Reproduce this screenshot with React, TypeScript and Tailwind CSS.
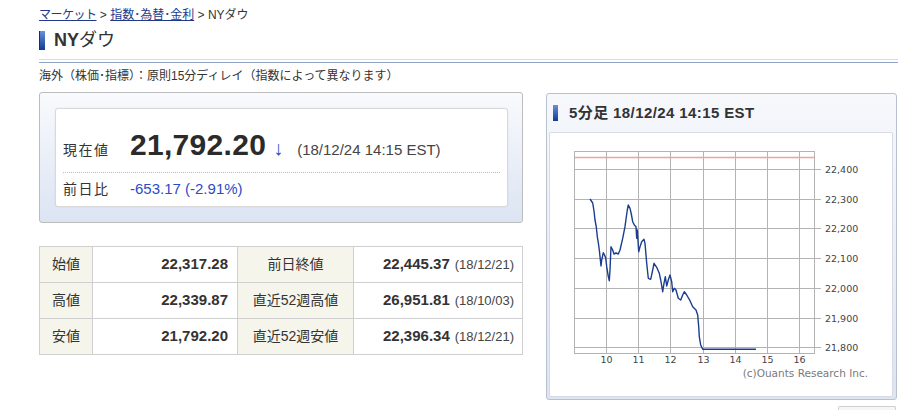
const font = { fontFamily: '"Liberation Sans", "Noto Sans CJK JP", sans-serif' };

// intraday 5-minute closes, already placed on the plot (x: px from 9:00, y: px from top)
const line: [number, number][] = [
  [16, 48], [18.7, 52], [20, 60], [21, 69], [22.3, 76], [23.3, 85.7], [24.5, 93], [25.3, 99], [27, 115],
  [27.7, 109], [29.3, 101.7], [30.5, 104], [31.7, 107], [32.7, 115.7], [34.3, 125.7], [35.3, 129.7],
  [36, 119], [37, 95.7], [38.7, 99], [40, 103], [42, 102], [44.3, 103], [46, 99], [48.7, 87.3],
  [51, 75.7], [52.3, 66], [53.3, 59], [54.3, 54], [56, 57.3], [57.3, 63], [58.7, 70.7], [60.3, 74],
  [62, 75.7], [62.7, 87.3], [63.3, 79], [64.7, 100.7], [66, 95.7], [67.7, 90.7], [70, 88.3],
  [71, 92.3], [72.7, 112.3], [74.3, 127.3], [76.7, 128.3], [78.7, 119], [80, 112.3], [82.7, 116.3],
  [85.3, 122.3], [86.7, 129], [88.7, 140.7], [90, 132.3], [91.3, 125.7], [92.7, 135], [94.3, 129],
  [96, 124], [97.7, 130.7], [98.7, 140.7], [100.3, 137.3], [102, 139], [104.3, 147.3], [106.7, 149],
  [108.7, 144], [110.3, 140.7], [112.7, 144], [116, 149.7], [118.7, 155.7], [122, 159], [123.7, 164],
  [124.7, 175.7], [125.3, 185.7], [126.7, 194], [128.7, 198.3], [182, 198.3],
];

const hours = [10, 11, 12, 13, 14, 15, 16];
const levels = [22400, 22300, 22200, 22100, 22000, 21900, 21800];
const hx = (h: number) => Math.round((h - 9) * 32.15) + 0.5;
const py = (p: number) => Math.round(18 + (22400 - p) * 0.297) + 0.5;

const IntradayChart = () => {
  const d = "M" + line.map(([x, y]) => `${x} ${y}`).join(" L");
  return (
    <svg width="300" height="232" viewBox="0 0 300 232" className="overflow-visible block">
      <rect x="0.5" y="0.5" width="240" height="202" fill="#fff" stroke="#b3b3b3" />
      {hours.map((h) => (
        <line key={h} x1={hx(h)} y1="0" x2={hx(h)} y2="203" stroke="#b3b3b3" />
      ))}
      {levels.map((p) => (
        <g key={p}>
          <line x1="0" y1={py(p)} x2="247" y2={py(p)} stroke="#b3b3b3" />
          <text x="251" y={py(p) + 3.5} fontSize="9.5" fill="#444" fontFamily="DejaVu Sans, sans-serif">
            {p.toLocaleString("en-US")}
          </text>
        </g>
      ))}
      <line x1="0.5" y1="6.5" x2="240.5" y2="6.5" stroke="#f2a0a0" strokeWidth="1.6" />
      <path d={d} fill="none" stroke="#1b3d8f" strokeWidth="1.4" strokeLinejoin="round" />
      {hours.map((h) => (
        <text
          key={h}
          x={hx(h)}
          y="212"
          fontSize="9.5"
          fill="#444"
          textAnchor="middle"
          fontFamily="DejaVu Sans, sans-serif"
        >
          {h}
        </text>
      ))}
      <text x="294" y="226" fontSize="10.5" fill="#7a7a7a" textAnchor="end" fontFamily="DejaVu Sans, sans-serif">
        (c)Ouants Research Inc.
      </text>
    </svg>
  );
};

const rows = [
  { k: "始値", v: "22,317.28", k2: "前日終値", v2: "22,445.37", date: "(18/12/21)" },
  { k: "高値", v: "22,339.87", k2: "直近52週高値", v2: "26,951.81", date: "(18/10/03)" },
  { k: "安値", v: "21,792.20", k2: "直近52週安値", v2: "22,396.34", date: "(18/12/21)" },
];

const App = () => {
  return (
    <div className="min-h-screen bg-white text-[#333]" style={font}>
      <div className="pl-[39px] pt-[8px] w-[898px]">
        <div className="text-[12px] leading-[14px] text-[#333]">
          <span className="text-[#22398a] underline tracking-[-0.5px]">マーケット</span>
          <span> &gt; </span>
          <span className="text-[#22398a] underline">指数･為替･金利</span>
          <span> &gt; NYダウ</span>
        </div>

        <div className="mt-[9px] flex items-center h-[19px]">
          <div className="w-[6px] h-[19px] bg-gradient-to-b from-[#6d8fd6] to-[#0f3a98] border-l border-[#0b2f80]" />
          <div className="ml-[9px] text-[18px] leading-[19px] font-bold text-[#333]">
            NY<span className="font-normal">ダウ</span>
          </div>
        </div>

        <div className="mt-[9px] h-px bg-[#d3dfeb]" />
        <div className="mt-[2px] h-px bg-[#8fa4c4]" />

        <div className="mt-[5px] text-[12px] leading-[16px] text-[#333]">
          海外（株価･指標）：原則15分ディレイ（指数によって異なります）
        </div>

        <div className="mt-[8px] flex items-start">
          <div className="w-[484px]">
            <div className="border border-[#bcbcbc] rounded-[3px] bg-gradient-to-b from-[#f9fafd] to-[#dce4f3] p-[15px] pr-[14px]">
              <div className="bg-white border border-[#d9d9d9] rounded-[3px] shadow-[0_0_2px_rgba(0,0,0,0.08)] px-[7px]">
                <div className="pt-[18px] pb-[9px] border-b border-dotted border-[#bbb]">
                  <div className="flex items-baseline h-[36px]">
                    <div className="w-[67px] text-[14px] tracking-[1.5px]">現在値</div>
                    <div className="text-[30px] leading-[36px] font-bold text-[#2b2b2b] tracking-[0.3px]">21,792.20</div>
                    <div className="ml-[7px] text-[20px] text-[#2a4ccc]">↓</div>
                    <div className="ml-[14px] text-[15px] text-[#444]">(18/12/24 14:15 EST)</div>
                  </div>
                </div>
                <div className="pt-[7px] pb-[8px] flex items-center h-[33px]">
                  <div className="w-[67px] text-[14px] tracking-[1.5px]">前日比</div>
                  <div className="text-[15px] text-[#2a4cc8]">-653.17 (-2.91%)</div>
                </div>
              </div>
            </div>

            <table className="mt-[23px] w-[484px] border-collapse text-[14px]">
              <tbody>
                {rows.map((r) => (
                  <tr key={r.k} className="h-[36px]">
                    <td className="w-[53px] border border-[#cfcfcf] bg-[#f5f5ec] text-center">{r.k}</td>
                    <td className="w-[145px] border border-[#cfcfcf] text-right pr-[9px] text-[15px] font-bold">{r.v}</td>
                    <td className="w-[116px] border border-[#cfcfcf] bg-[#f5f5ec] text-center">{r.k2}</td>
                    <td className="border border-[#cfcfcf] text-right pr-[8px]">
                      <span className="text-[15px] font-bold">{r.v2}</span>
                      <span className="ml-[5px] text-[13px] text-[#444]">{r.date}</span>
                    </td>
                  </tr>
                ))}
              </tbody>
            </table>
          </div>

          <div className="ml-[23px] mt-[1px] w-[351px]">
            <div className="border border-[#b9c1d0] rounded-[3px] bg-gradient-to-b from-[#f6f8fc] to-[#dde4f2] pl-[6px] pt-[11px] pb-[2px]">
              <div className="flex items-center h-[16px]">
                <div className="w-[5px] h-[16px] bg-gradient-to-b from-[#6d8fd6] to-[#0f3a98]" />
                <div className="ml-[11px] text-[15px] leading-[16px] font-bold text-[#333] tracking-[0.4px]">5分足 18/12/24 14:15 EST</div>
              </div>
              <div className="mt-[11px] -ml-[4px] mr-[3px] bg-white border border-[#d6dbe4] rounded-[2px] pl-[24px] pt-[18px] pb-[13px]">
                <IntradayChart />
              </div>
            </div>
            <div className="mt-[6px] ml-auto mr-[1px] w-[58px] h-[10px] border border-b-0 border-[#cfcfcf] rounded-t-[2px] bg-[#f6f6f6]" />
          </div>
        </div>
      </div>
    </div>
  );
};

export default App;
